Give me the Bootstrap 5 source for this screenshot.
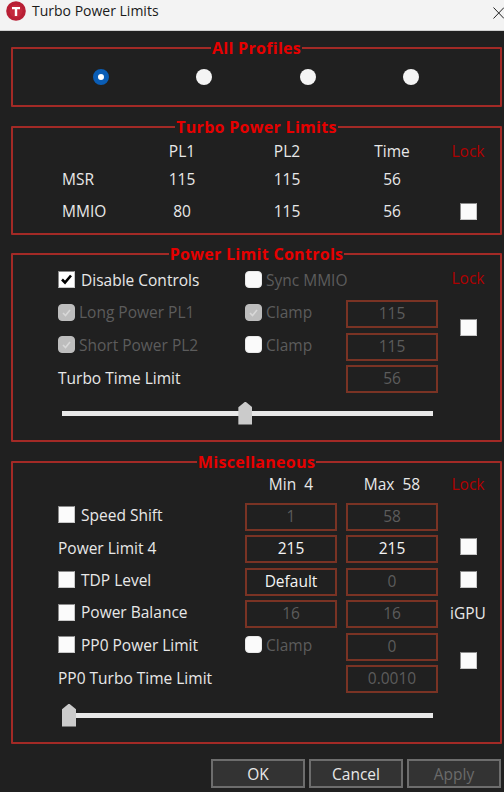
<!DOCTYPE html>
<html lang="en">
<head>
  <meta charset="UTF-8" />
  <meta name="viewport" content="width=device-width, initial-scale=1.0" />
  <title>Turbo Power Limits</title>
  <link href="https://cdn.jsdelivr.net/npm/bootstrap@5.3.3/dist/css/bootstrap.min.css" rel="stylesheet" />

  <style>
    html, body {
      height: 100%;
      overflow: hidden;
    }

    body {
      background: #202020;
      color: #e8e8e8;
      font-family: "Open Sans", "Liberation Sans", sans-serif;
      font-size: 15.5px;
      line-height: 20px;
    }

    .title-bar {
      height: 31px;
      background: #f3f3f3;
      color: #1a1a1a;
      font-size: 14px;
      padding: 1px 0 0 6px;
      gap: 6px;
      border-bottom: 1px solid #d0d0d0;
    }

    .close-x {
      margin: 6px 0 0 auto;
    }

    .panels {
      padding: 7px 2px 0 11px;
    }

    fieldset.group-box {
      border: 2px solid #a32a26;
      border-radius: 1px;
      padding: 0;
      margin: 0 0 9.5px 0;
    }

    fieldset.group-box legend {
      float: none;
      width: auto;
      margin: 0 auto;
      padding: 0 1px;
      color: #e60000;
      font-size: 16px;
      font-weight: 700;
      line-height: 20px;
      letter-spacing: 0.3px;
    }

    .profiles {
      padding: 11px 0 20px 80px;
      gap: 87.3px;
    }

    .limits-grid {
      display: grid;
      grid-template-columns: 68px 104px 106px 104px 48px;
      grid-template-rows: 18px 28px 28px;
      row-gap: 4.5px;
      padding: 5.5px 0 7.5px 49px;
      align-items: center;
    }

    .control-grid {
      display: grid;
      grid-template-columns: 178px 92px 92px 42px;
      grid-auto-rows: 28px;
      column-gap: 9px;
      row-gap: 4.5px;
      padding: 3.5px 0 0 45px;
      align-items: center;
    }

    .misc-grid {
      grid-template-rows: 24.5px;
      padding-top: 2px;
    }

    .cell-c {
      text-align: center;
    }

    .plain-label {
      margin-bottom: 2px;
    }

    .head-label {
      margin-bottom: 4px;
    }

    .lock-text {
      color: #b00000;
      text-align: center;
    }

    .control-grid .lock-text {
      margin-bottom: 4px;
    }

    .control-grid .lock-high {
      margin-bottom: 8px;
    }

    .span-two {
      grid-row: span 2;
      align-self: center;
    }

    .off-text {
      color: #5c5c5c;
    }

    .check-row {
      display: flex;
      align-items: center;
      gap: 6px;
      white-space: nowrap;
      margin-bottom: 4px;
    }

    .check-row.tight {
      gap: 4px;
    }

    .win-check {
      appearance: none;
      display: block;
      width: 17px;
      height: 17px;
      margin: 0;
      flex: none;
      background: #fbfbfb;
      border: 1px solid;
      border-color: #8a8a8a #c8c8c8 #c8c8c8 #8a8a8a;
    }

    .win-check:checked {
      background: #fff url("data:image/svg+xml,%3Csvg xmlns='http://www.w3.org/2000/svg' viewBox='0 0 15 15'%3E%3Cpath d='M3 7.5l3 3 6-7' fill='none' stroke='%23000' stroke-width='2.6'/%3E%3C/svg%3E") center / 15px no-repeat;
    }

    .win-check:disabled {
      background-color: #fafafa;
      border: 1px solid #e8e8e8;
      border-radius: 4px;
    }

    .win-check:disabled:checked {
      background: #bdbdbd url("data:image/svg+xml,%3Csvg xmlns='http://www.w3.org/2000/svg' viewBox='0 0 15 15'%3E%3Cpath d='M4 8l2.5 2.5 4.500-5.500' fill='none' stroke='%23d8d8d8' stroke-width='1.6'/%3E%3C/svg%3E") center / 15px no-repeat;
      border-color: #bdbdbd;
    }

    .lock-check {
      justify-self: center;
    }

    .control-grid .lock-check {
      margin-bottom: 5px;
    }

    .win-radio {
      appearance: none;
      display: block;
      width: 16px;
      height: 16px;
      margin: 0;
      background: #f4f4f4;
      border-radius: 50%;
    }

    .win-radio:checked {
      background: #fff;
      border: 5px solid #0a5db5;
    }

    .value-box.form-control {
      height: 28px;
      min-height: 0;
      padding: 0 0 2px;
      background: transparent;
      border: 2px solid #7a3324;
      border-radius: 0;
      color: #f4f4f4;
      font-size: 15.5px;
      line-height: 20px;
      text-align: center;
      box-shadow: none;
    }

    .value-box.form-control:disabled {
      background: transparent;
      color: #5c5c5c;
      opacity: 1;
    }

    .time-slider {
      appearance: none;
      display: block;
      width: 371px;
      height: 24px;
      margin: 8px 0 15px 49px;
      background: transparent;
    }

    .time-slider::-webkit-slider-runnable-track {
      height: 5px;
      background: #e8e8e8;
    }

    .time-slider::-webkit-slider-thumb {
      appearance: none;
      width: 14px;
      height: 23px;
      margin-top: -9px;
      background: #cbcbcb;
      clip-path: polygon(50% 0, 100% 25%, 100% 100%, 0 100%, 0 25%);
    }

    .time-slider.misc-slider {
      margin-top: 10px;
      margin-bottom: 15px;
    }

    .dialog-buttons {
      padding-right: 1px;
      gap: 4px;
      margin-top: 15px;
    }

    .dialog-buttons .btn {
      width: 94px;
      height: 29px;
      padding: 0;
      background: #333;
      border: 2px solid #6d6d6d;
      border-radius: 0;
      color: #e8e8e8;
      font-size: 15.5px;
      line-height: 24px;
    }

    .dialog-buttons .btn:disabled {
      background: #333;
      border-color: #6d6d6d;
      color: #6a6a6a;
      opacity: 1;
    }
  </style>
</head>
<body>

  <!-- Title bar -->
  <div class="title-bar d-flex align-items-start">
    <svg width="20" height="20" viewBox="0 0 20 20">
      <circle cx="10" cy="10" r="9.800" fill="#b81f35" />
      <circle cx="10" cy="10" r="6.500" fill="#c4283c" />
      <path d="M6 6h8v2.200h-2.800V15H8.800V8.200H6z" fill="#fff" />
    </svg>
    <span>Turbo Power Limits</span>
    <svg class="close-x" width="11" height="12" viewBox="0 0 11 12">
      <path d="M0.500 0.500L11 11.500M11 0.500L0.500 11.500" stroke="#222" fill="none" />
    </svg>
  </div>

  <div class="panels">

    <!-- All Profiles -->
    <fieldset class="group-box">
      <legend>All Profiles</legend>
      <div class="profiles d-flex">
        <input class="win-radio" type="radio" name="profile" checked />
        <input class="win-radio" type="radio" name="profile" />
        <input class="win-radio" type="radio" name="profile" />
        <input class="win-radio" type="radio" name="profile" />
      </div>
    </fieldset>

    <!-- Turbo Power Limits -->
    <fieldset class="group-box">
      <legend>Turbo Power Limits</legend>
      <div class="limits-grid">
        <span></span>
        <span class="cell-c">PL1</span>
        <span class="cell-c">PL2</span>
        <span class="cell-c">Time</span>
        <span class="lock-text">Lock</span>
        <span>MSR</span>
        <span class="cell-c">115</span>
        <span class="cell-c">115</span>
        <span class="cell-c">56</span>
        <span></span>
        <span>MMIO</span>
        <span class="cell-c">80</span>
        <span class="cell-c">115</span>
        <span class="cell-c">56</span>
        <input class="win-check lock-check" type="checkbox" />
      </div>
    </fieldset>

    <!-- Power Limit Controls -->
    <fieldset class="group-box">
      <legend>Power Limit Controls</legend>
      <div class="control-grid">
        <label class="check-row"><input class="win-check" type="checkbox" checked />Disable Controls</label>
        <label class="check-row tight off-text"><input class="win-check" type="checkbox" disabled />Sync MMIO</label>
        <span></span>
        <span class="lock-text lock-high">Lock</span>

        <label class="check-row tight off-text"><input class="win-check" type="checkbox" checked disabled />Long Power PL1</label>
        <label class="check-row tight off-text"><input class="win-check" type="checkbox" checked disabled />Clamp</label>
        <input class="value-box form-control" value="115" disabled />
        <input class="win-check lock-check span-two" type="checkbox" />

        <label class="check-row tight off-text"><input class="win-check" type="checkbox" checked disabled />Short Power PL2</label>
        <label class="check-row tight off-text"><input class="win-check" type="checkbox" disabled />Clamp</label>
        <input class="value-box form-control" value="115" disabled />

        <span class="plain-label">Turbo Time Limit</span>
        <span></span>
        <input class="value-box form-control" value="56" disabled />
        <span></span>
      </div>
      <input class="time-slider" type="range" min="0" max="100" step="0.1" value="49.400" />
    </fieldset>

    <!-- Miscellaneous -->
    <fieldset class="group-box">
      <legend>Miscellaneous</legend>
      <div class="control-grid misc-grid">
        <span></span>
        <span class="cell-c head-label">Min&nbsp; 4</span>
        <span class="cell-c head-label">Max&nbsp; 58</span>
        <span class="lock-text">Lock</span>

        <label class="check-row"><input class="win-check" type="checkbox" />Speed Shift</label>
        <input class="value-box form-control" value="1" disabled />
        <input class="value-box form-control" value="58" disabled />
        <span></span>

        <span class="plain-label">Power Limit 4</span>
        <input class="value-box form-control" value="215" />
        <input class="value-box form-control" value="215" />
        <input class="win-check lock-check" type="checkbox" />

        <label class="check-row"><input class="win-check" type="checkbox" />TDP Level</label>
        <input class="value-box form-control" value="Default" />
        <input class="value-box form-control" value="0" disabled />
        <input class="win-check lock-check" type="checkbox" />

        <label class="check-row"><input class="win-check" type="checkbox" />Power Balance</label>
        <input class="value-box form-control" value="16" disabled />
        <input class="value-box form-control" value="16" disabled />
        <span class="cell-c plain-label">iGPU</span>

        <label class="check-row"><input class="win-check" type="checkbox" />PP0 Power Limit</label>
        <label class="check-row tight off-text"><input class="win-check" type="checkbox" disabled />Clamp</label>
        <input class="value-box form-control" value="0" disabled />
        <input class="win-check lock-check span-two" type="checkbox" />

        <span class="plain-label">PP0 Turbo Time Limit</span>
        <span></span>
        <input class="value-box form-control" value="0.0010" disabled />
      </div>
      <input class="time-slider misc-slider" type="range" min="0" max="100" step="0.1" value="0" />
    </fieldset>

    <!-- Buttons -->
    <div class="dialog-buttons d-flex justify-content-end">
      <button class="btn" type="button">OK</button>
      <button class="btn" type="button">Cancel</button>
      <button class="btn" type="button" disabled>Apply</button>
    </div>
  </div>

  <script src="https://cdn.jsdelivr.net/npm/bootstrap@5.3.3/dist/js/bootstrap.bundle.min.js"></script>
</body>
</html>
